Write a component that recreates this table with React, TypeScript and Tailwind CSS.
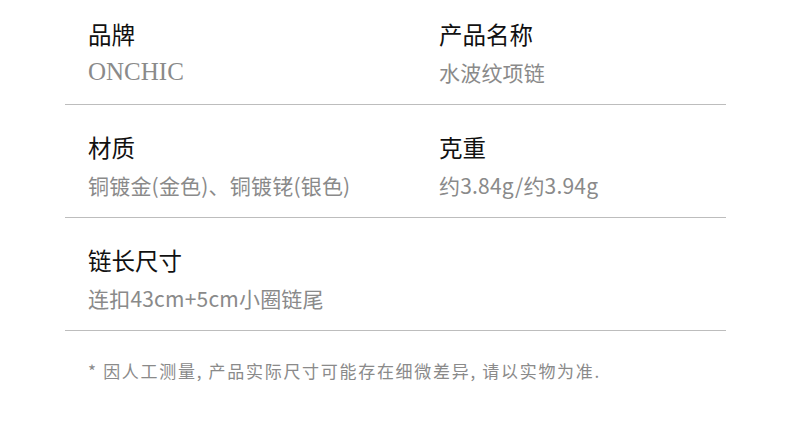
const sans = "font-['Noto_Sans_CJK_SC','Noto_Sans',sans-serif]";

type Item = { label: string; value: string; serif?: boolean };

const rows: { items: Item[]; top: string }[] = [
  {
    top: 'pt-[18px]',
    items: [
      { label: '品牌', value: 'ONCHIC', serif: true },
      { label: '产品名称', value: '水波纹项链' },
    ],
  },
  {
    top: 'pt-[26px]',
    items: [
      { label: '材质', value: '铜镀金(金色)、铜镀铑(银色)' },
      { label: '克重', value: '约3.84g/约3.94g' },
    ],
  },
  {
    top: 'pt-[26px]',
    items: [{ label: '链长尺寸', value: '连扣43cm+5cm小圈链尾' }],
  },
];

function Cell({ item }: { item: Item }) {
  return (
    <div className="flex flex-col">
      <div className="text-[23.5px] leading-[32px] text-[#111]">{item.label}</div>
      <div
        className={
          item.serif
            ? "mt-[7px] text-[25px] leading-[30px] text-[#8a8a8a] font-['Liberation_Serif',serif]"
            : 'mt-[7px] text-[21px] leading-[30px] tracking-[0.2px] text-[#8a8a8a]'
        }
      >
        {item.value}
      </div>
    </div>
  );
}

export default function App() {
  return (
    <div className={`min-h-[422px] w-[790px] bg-white ${sans}`}>
      <div className="mx-[65px] w-[661px]">
        {rows.map((row, i) => (
          <div
            key={i}
            className={`grid grid-cols-[351px_1fr] border-b border-[#bdbdbd] pb-[17px] pl-[23px] ${row.top}`}
          >
            {row.items.map((item) => (
              <Cell key={item.label} item={item} />
            ))}
          </div>
        ))}
        <p className="mt-[28px] pl-[23px] text-[17px] leading-[24px] tracking-[1.7px] text-[#8a8a8a]">
          * 因人工测量, 产品实际尺寸可能存在细微差异, 请以实物为准.
        </p>
      </div>
    </div>
  );
}
